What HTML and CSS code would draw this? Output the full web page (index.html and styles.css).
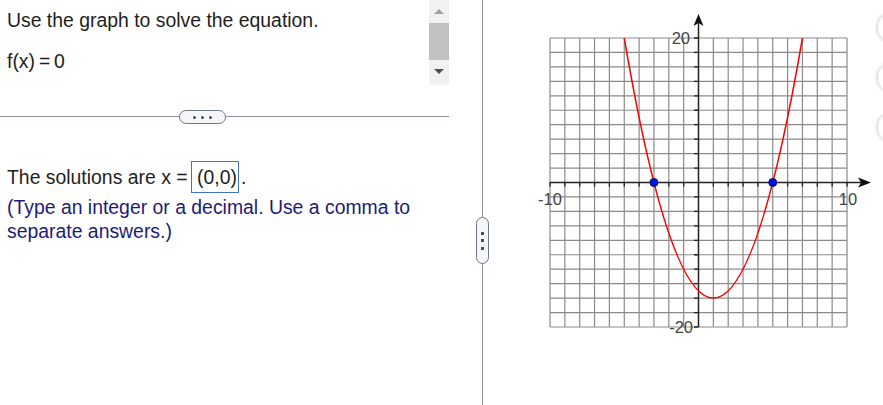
FILE: index.html
```html
<!DOCTYPE html>
<html>
<head>
<meta charset="utf-8">
<link rel="stylesheet" href="styles.css">
</head>
<body>
<div class="page">
  <div class="left">
    <div class="question">
      <div class="qtext">
        <p class="q1">Use the graph to solve the equation.</p>
        <p class="q2">f(x)<span class="sp"> </span>=<span class="sp"> </span>0</p>
      </div>
      <div class="scrollbar">
        <div class="arrow-up"></div>
        <div class="thumb"></div>
        <div class="arrow-down"></div>
      </div>
    </div>
    <div class="sep">
      <div class="hline short"></div>
      <div class="hpill"><span class="dot"></span><span class="dot"></span><span class="dot"></span></div>
      <div class="hline"></div>
    </div>
    <p class="ans">The solutions are x =<span class="box">(0,0)</span><span class="period">.</span></p>
    <p class="hint">(Type an integer or a decimal. Use a comma to separate answers.)</p>
  </div>
  <div class="divider">
    <div class="vline top"></div>
    <div class="vpill"><span class="dot"></span><span class="dot"></span><span class="dot"></span></div>
    <div class="vline"></div>
  </div>
  <svg class="graph" width="394" height="405" viewBox="489 0 394 405" xmlns="http://www.w3.org/2000/svg">
    <defs>
      <filter id="sh" x="-50%" y="-50%" width="200%" height="200%">
        <feDropShadow dx="0" dy="0" stdDeviation="2" flood-color="#000" flood-opacity="0.35"/>
      </filter>
    </defs>
    <path class="grid" d="M550 38V327M564.85 38V327M579.7 38V327M594.55 38V327M609.4 38V327M624.25 38V327M639.1 38V327M653.95 38V327M668.8 38V327M683.65 38V327M713.35 38V327M728.2 38V327M743.05 38V327M757.9 38V327M772.75 38V327M787.6 38V327M802.45 38V327M817.3 38V327M832.15 38V327M847 38V327
    M550 38H847M550 52.45H847M550 66.9H847M550 81.35H847M550 95.8H847M550 110.25H847M550 124.7H847M550 139.15H847M550 153.6H847M550 168.05H847M550 196.95H847M550 211.4H847M550 225.85H847M550 240.3H847M550 254.75H847M550 269.2H847M550 283.65H847M550 298.1H847M550 312.55H847M550 327H847"/>
    <path class="ticks" d="M694 38H698.5M694 52.45H698.5M694 66.9H698.5M694 81.35H698.5M694 95.8H698.5M694 110.25H698.5M694 124.7H698.5M694 139.15H698.5M694 153.6H698.5M694 168.05H698.5M694 196.95H698.5M694 211.4H698.5M694 225.85H698.5M694 240.3H698.5M694 254.75H698.5M694 269.2H698.5M694 283.65H698.5M694 298.1H698.5M694 312.55H698.5M694 327H698.5
    M550 182.5V186.5M564.85 182.5V186.5M579.7 182.5V186.5M594.55 182.5V186.5M609.4 182.5V186.5M624.25 182.5V186.5M639.1 182.5V186.5M653.95 182.5V186.5M668.8 182.5V186.5M683.65 182.5V186.5M713.35 182.5V186.5M728.2 182.5V186.5M743.05 182.5V186.5M757.9 182.5V186.5M772.75 182.5V186.5M787.6 182.5V186.5M802.45 182.5V186.5M817.3 182.5V186.5M832.15 182.5V186.5M847 182.5V186.5"/>
    <path class="axis" d="M550 182.5H862M698.5 327V20"/>
    <polygon class="arrow" points="698.5,14 693.5,26 698.5,23 703.5,26"/>
    <polygon class="arrow" points="871,182.5 858,177.5 861,182.5 858,187.5"/>
    <text class="lbl" x="690" y="43.5" text-anchor="end">20</text>
    <text class="lbl" x="693" y="333" text-anchor="end">-20</text>
    <text class="lbl" x="550" y="205" text-anchor="middle">-10</text>
    <text class="lbl" x="848" y="205" text-anchor="middle">10</text>
    <path class="curve" d="M624.25 38Q713.35 558.2 802.45 38"/>
    <circle class="pt" cx="653.95" cy="182.5" r="4"/>
    <circle class="pt" cx="772.75" cy="182.5" r="4"/>
    <circle class="fab" cx="892" cy="27.5" r="14" filter="url(#sh)"/>
    <circle class="fab" cx="892" cy="77.5" r="14" filter="url(#sh)"/>
    <circle class="fab" cx="892" cy="127.5" r="14" filter="url(#sh)"/>
  </svg>
</div>
</body>
</html>
```
FILE: styles.css
```css
html, body {
  margin: 0;
  padding: 0;
  background: #fff;
}
body {
  font-family: "Liberation Sans", Arial, sans-serif;
  color: #1e1e1e;
  overflow: hidden;
}
.page {
  display: flex;
  width: 883px;
  height: 405px;
  overflow: hidden;
}
.left {
  width: 450px;
  flex: none;
  font-size: 19.4px;
}
.question {
  display: flex;
  height: 110px;
}
.qtext {
  flex: 1;
  padding-left: 7px;
}
.q1, .q2 {
  margin: 0;
  line-height: 22px;
  white-space: nowrap;
}
.q1 { padding-top: 9px; }
.q2 { margin-top: 19px; }
.sp { font-size: 14px; }
.scrollbar {
  width: 20px;
  height: 85px;
  margin-right: 1px;
  background: #f1f1f1;
  display: flex;
  flex-direction: column;
  align-items: center;
}
.arrow-up {
  width: 0;
  height: 0;
  margin-top: 9px;
  border-left: 5.5px solid transparent;
  border-right: 5.5px solid transparent;
  border-bottom: 5px solid #a3a3a3;
}
.thumb {
  width: 20px;
  height: 37px;
  margin-top: 9px;
  background: #c1c1c1;
}
.arrow-down {
  width: 0;
  height: 0;
  margin-top: 9px;
  border-left: 5.5px solid transparent;
  border-right: 5.5px solid transparent;
  border-top: 5px solid #505050;
}
.sep {
  display: flex;
  height: 14px;
  width: 449px;
}
.hline {
  flex: 1;
  height: 1px;
  margin-top: 6px;
  background: #8a92a2;
}
.hline.short {
  flex: none;
  width: 179px;
}
.hpill {
  width: 45px;
  height: 12px;
  border: 1px solid #6f7684;
  border-radius: 7px;
  background: #f5f6f8;
  display: flex;
  align-items: center;
  justify-content: center;
  gap: 5px;
}
.dot {
  width: 3px;
  height: 3px;
  border-radius: 50%;
  background: #4a4f5a;
  display: block;
}
.ans {
  margin: 37px 0 0 7px;
  line-height: 24px;
  white-space: nowrap;
}
.box {
  display: inline-block;
  margin-left: 3.5px;
  padding: 4px 1px 3px 5px;
  border: 1px solid #3f74c6;
  line-height: normal;
  color: #1e1e1e;
}
.period { margin-left: 2px; }
.hint {
  margin: 2px 0 0 7px;
  line-height: 24px;
  color: #1c1c78;
}
.divider {
  width: 13px;
  margin-left: 26px;
  flex: none;
  display: flex;
  flex-direction: column;
  align-items: center;
}
.vline {
  width: 1px;
  flex: 1;
  background: #8a92a2;
}
.vline.top {
  flex: none;
  height: 217px;
}
.vpill {
  width: 11px;
  height: 45px;
  flex: none;
  border: 1px solid #6f7684;
  border-radius: 7px;
  background: #f5f6f8;
  display: flex;
  flex-direction: column;
  align-items: center;
  justify-content: center;
  gap: 4.5px;
}
.vpill .dot {
  width: 3px;
  height: 3px;
  border-radius: 0;
}
.graph {
  display: block;
  flex: none;
}
.grid {
  fill: none;
  stroke: #8a8a8a;
  stroke-width: 1.2;
}
.ticks {
  fill: none;
  stroke: #222;
  stroke-width: 1.3;
}
.axis {
  fill: none;
  stroke: #222;
  stroke-width: 1.5;
}
.arrow { fill: #111; }
.lbl {
  font-family: "Liberation Sans", Arial, sans-serif;
  font-size: 16.5px;
  fill: #444;
}
.curve {
  fill: none;
  stroke: #f00;
  stroke-width: 1.5;
}
.pt {
  fill: #0010ff;
  stroke: #111;
  stroke-width: 1;
}
.fab { fill: #fff; }
```
